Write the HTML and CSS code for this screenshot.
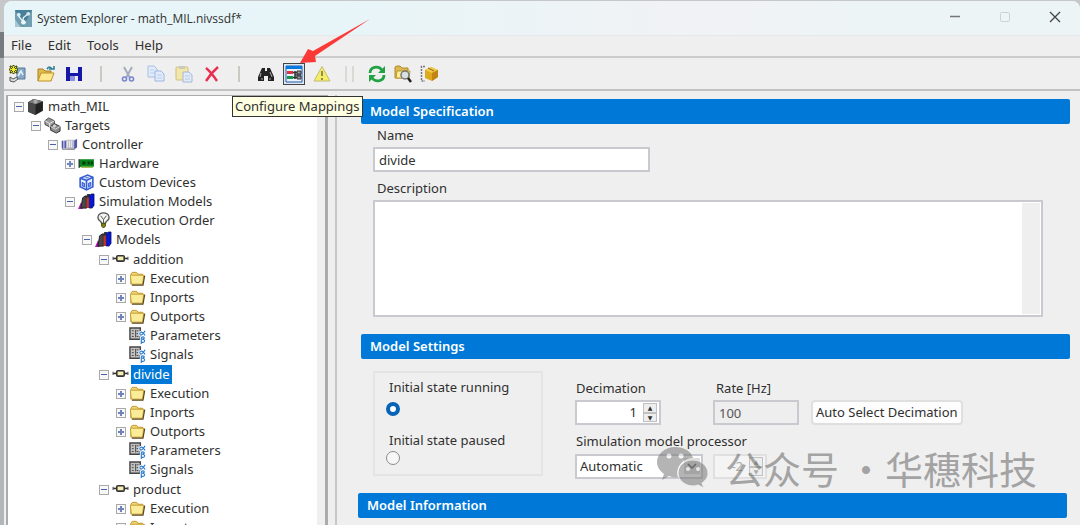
FILE: index.html
```html
<!DOCTYPE html>
<html lang="en">
<head>
<meta charset="utf-8">
<title>System Explorer - math_MIL.nivssdf*</title>
<link rel="stylesheet" href="styles.css">
</head>
<body>
<svg class="defs" aria-hidden="true">
  <symbol id="i-folder" viewBox="0 0 18 16"><path d="M2 14V3.500L3.500 1.500H8L9.500 3.500H14.500V5" fill="#f0d878" stroke="#bd9428"/><path d="M1.500 5L2.500 4.500H15.500L14.500 14H2.500Z" fill="#fbed97" stroke="#c49a30"/><path d="M3 15H14.800L16.600 5" fill="none" stroke="#5c471b" stroke-width="1.300"/></symbol>
  <symbol id="i-param" viewBox="0 0 18 18"><path d="M1 1H12V13H1Z" fill="#c4c4c4" stroke="#444" stroke-width="1.500"/><path d="M3 4H5M3 7H5M3 10H5M7 3V11M8 4H10M8 7H10M8 10H10" stroke="#444" fill="none"/><path d="M17 4C14 10 11.500 9 11.500 7S14.500 4 17 9M13 18V12C13 10 17 10 16 12L14 13C18 13 17 17 13 16" fill="none" stroke="#fff" stroke-width="3"/><path d="M17 4C14 10 11.500 9 11.500 7S14.500 4 17 9M13 18V12C13 10 17 10 16 12L14 13C18 13 17 17 13 16" fill="none" stroke="#267bd0" stroke-width="1.200"/></symbol>
  <symbol id="i-node" viewBox="0 0 16 16"><path d="M1 7H15" stroke="#333" stroke-width="1.500"/><path d="M1 5.500V8.500M15 5.500V8.500" stroke="#555"/><rect x="4.500" y="4.500" width="7" height="5" rx="1" fill="#f5efb2" stroke="#333" stroke-width="1.500"/></symbol>
  <symbol id="i-models" viewBox="0 0 18 18"><path d="M0 17L3 10L5 17Z" fill="#b317c0"/><path d="M3 16L5 5L8 3L9 5V16Z" fill="#494949" stroke="#171717"/><path d="M8 4L10 1H13L12 5V16H8Z" fill="#333"/><path d="M9 5H12V16H9Z" fill="#c1342d"/><path d="M12 3L14 1H17V13L15 16H12Z" fill="#0717d8" stroke="#090950" stroke-width=".7"/></symbol>
  <symbol id="i-cube" viewBox="0 0 16 16"><path d="M1 4L6 1L15 3V12L8 16L1 13Z" fill="#222"/><path d="M1 4L6 1L15 3L8 6Z" fill="#777"/><path d="M1 4L8 6V16L1 13Z" fill="#484848"/><circle cx="8" cy="3.300" r="2" fill="#aaa"/></symbol>
  <symbol id="i-targets" viewBox="0 0 18 18"><path d="M1 4L5 1L11 4V9L7 11L1 8Z" fill="#999" stroke="#444"/><path d="M1 4L6 7L11 4M6 7V11" fill="none" stroke="#eee"/><path d="M7 10L11 7L17 10V15L13 17L7 14Z" fill="#8b8b8b" stroke="#333"/><path d="M7 10L12 13L17 10" fill="none" stroke="#ddd"/><circle cx="11" cy="9.500" r="1.500" fill="#ddd"/></symbol>
  <symbol id="i-controller" viewBox="0 0 18 16"><path d="M1 4H4L6 3H17V11L14 14L4 12L1 13Z" fill="#bcbccb"/><path d="M1.500 4V12M4.500 4V12" stroke="#5258b0" stroke-width="1.500"/><path d="M7 4V11M9 4V11M11 4V11" stroke="#ececf2"/><path d="M14 4V13L17 11V2Z" fill="#5156a8"/><path d="M1 13H14" stroke="#777"/></symbol>
  <symbol id="i-hardware" viewBox="0 0 16 16"><path d="M1 4H15V11H3L1 12Z" fill="#06861b"/><path d="M1 4V12" stroke="#222"/><path d="M4 6H7V9H4ZM9 6H11V9H9ZM12 6H14V9H12Z" fill="#043d0b"/><path d="M3 11.500H14" stroke="#85a51d"/></symbol>
  <symbol id="i-custom" viewBox="0 0 16 16"><path d="M2 4L9 1L14 3V12L8 15L2 12Z" fill="#e9efff" stroke="#355ed3" stroke-width="1.500"/><path d="M2 4L8 6L14 3M8 6V15" fill="none" stroke="#355ed3" stroke-width="1.500"/><path d="M4 8V11L6 12V9ZM10 9L12 8V11L10 12ZM7 3.500H10" fill="#9fb5f3" stroke="#355ed3"/></symbol>
  <symbol id="i-bulb" viewBox="0 0 16 18"><path d="M6 12L5 10C0 7 2 1 8 1S16 7 11 10L10 12Z" fill="#f3f3ef" stroke="#555" stroke-width="1.400"/><path d="M8 12V8L5 4M8 8L11 4" fill="none" stroke="#555"/><path d="M6 12H10V15L8 17L6 15Z" fill="#86800c" stroke="#49480b"/></symbol>
</svg>

<div class="window">
  <header class="titlebar">
    <svg class="logo" viewBox="0 0 18 18"><rect width="18" height="18" fill="#6f9fb1"/><path d="M0 0H18L9 17Z" fill="#47809a"/><path d="M3 5L8 12L9 8L14 4" fill="none" stroke="#e4f2f5" stroke-width="1.500"/><circle cx="4" cy="5" r="2" fill="#d7e9ef"/><circle cx="14" cy="4" r="2" fill="#d7e9ef"/><circle cx="9" cy="13" r="2.500" fill="#edf7fa"/><path d="M0 10L6 18H0Z" fill="#a9c6d1"/></svg>
    <h1 class="title">System Explorer - math_MIL.nivssdf*</h1>
    <div class="controls">
      <button class="control" aria-label="Minimize"><svg viewBox="0 0 12 12"><path d="M1 5.500H11" stroke="#777" stroke-width="1.500"/></svg></button>
      <button class="control" aria-label="Maximize" disabled><svg viewBox="0 0 12 12"><rect x="1.500" y="1.500" width="9" height="9" rx="1" fill="none" stroke="#ccd2d3"/></svg></button>
      <button class="control" aria-label="Close"><svg viewBox="0 0 12 12"><path d="M1 1L11 11M11 1L1 11" stroke="#444" stroke-width="1.300"/></svg></button>
    </div>
  </header>
  <nav class="menubar"><button>File</button><button>Edit</button><button>Tools</button><button>Help</button></nav>
  <div class="toolbar" role="toolbar">
    <button class="tool" aria-label="New"><svg viewBox="0 0 18 18"><path d="M8 3H16V14H8Z" fill="#87a9c7" stroke="#54799a"/><path d="M9 11L12 6L14 10" fill="none" stroke="#e9f3fb" stroke-width="1.500"/><path d="M1 1L8 8M8 1L1 8M4.500 0V9M0 4.500H9" stroke="#454b00" stroke-width="2"/><path d="M2 2L7 7M7 2L2 7M4.500 1V8M1 4.500H8" stroke="#f4ea22"/><path d="M1 12L4 14L8 12L9 14L5 17L1 16Z" fill="#ddd" stroke="#555"/></svg></button>
    <button class="tool" aria-label="Open"><svg viewBox="0 0 18 18"><path d="M1 16V4H6L8 6H14V16" fill="#e1ba4d" stroke="#a87f22"/><path d="M1 16L4 8H17L14 16Z" fill="#ffe990" stroke="#bd9126"/><path d="M10 4C12 1 14 2 15 4M12 4H17V1" fill="none" stroke="#287f93" stroke-width="1.500"/></svg></button>
    <button class="tool" aria-label="Save"><svg viewBox="0 0 18 18"><path d="M1 2H17V16H1Z" fill="#1718a8"/><path d="M5 2H13V8H5Z" fill="#eceef8"/><path d="M5 11H13V16H5Z" fill="#8f94d8"/><path d="M10 11H13V16H10Z" fill="#e8eafa"/></svg></button>
    <span class="sep"></span>
    <button class="tool" aria-label="Cut"><svg viewBox="0 0 18 18"><path d="M5 2L11 13M13 2L7 13" stroke="#a5adbd" stroke-width="2"/><circle cx="5.500" cy="14" r="2" fill="none" stroke="#7786d1" stroke-width="1.600"/><circle cx="12.500" cy="14" r="2" fill="none" stroke="#7786d1" stroke-width="1.600"/></svg></button>
    <button class="tool" aria-label="Copy"><svg viewBox="0 0 18 18"><path d="M1 1H7L10 4V12H1Z" fill="#e1ecfb" stroke="#a6bfe4"/><path d="M3 5H7M3 8H8" stroke="#b9cdec"/><path d="M8 6H14L17 9V16H8Z" fill="#e1ecfb" stroke="#9cb7df"/><path d="M10 10H15M10 13H15" stroke="#b9cdec"/></svg></button>
    <button class="tool" aria-label="Paste"><svg viewBox="0 0 18 18"><rect x="1" y="2" width="12" height="13" rx="1" fill="#f3e7a8" stroke="#cfc080"/><path d="M4 1H10V4H4Z" fill="#c9c9bd"/><path d="M8 7H14L17 10V17H8Z" fill="#e1ebf8" stroke="#a4b8d8"/><path d="M10 11H15M10 14H15" stroke="#b8c9e2"/></svg></button>
    <button class="tool" aria-label="Delete"><svg viewBox="0 0 18 18"><path d="M3 3Q8 7 14 16M15 2Q8 8 3 16" fill="none" stroke="#e92f50" stroke-width="2.400"/></svg></button>
    <span class="sep"></span>
    <button class="tool" aria-label="Find"><svg viewBox="0 0 18 18"><path d="M5 3H8V6H10V3H13L17 12V16H11V11H7V16H1V12Z" fill="#232323"/><path d="M4 8L3 12M13 7L15 12M5 13V15M13 13V15" stroke="#aaa"/></svg></button>
    <button class="tool tool-active" aria-label="Configure Mappings"><svg viewBox="0 0 18 18"><path d="M1 1H17V17H1Z" fill="#e9f2fc" stroke="#2459aa"/><path d="M1 1H17V4H1Z" fill="#0879df"/><path d="M2 6H8V9H2Z" fill="#dc3340"/><path d="M2 11H8V14H2Z" fill="#169645"/><path d="M8 7.500H16M8 12.500H16M10 10H16M10 6V14" stroke="#333" stroke-width="1.500"/><path d="M12 6H16V9H12ZM12 11H16V14H12Z" fill="#999" stroke="#333"/></svg></button>
    <button class="tool" aria-label="Warnings"><svg viewBox="0 0 18 18"><path d="M9 1.500L17 16H1Z" fill="#f5ed66" stroke="#c4bb79"/><path d="M9 6V11M9 13V15" stroke="#77734f" stroke-width="1.600"/></svg></button>
    <span class="sep sep-double"></span>
    <span class="tool-group">
      <button class="tool" aria-label="Refresh"><svg viewBox="0 0 18 18"><path d="M2 8C2 2 10 0 14 5M16 10C16 16 8 18 4 13" fill="none" stroke="#21a345" stroke-width="2.800"/><path d="M17 1V8H10ZM1 17V10H8Z" fill="#21a345"/></svg></button>
      <button class="tool" aria-label="Browse"><svg viewBox="0 0 18 18"><path d="M1 13V2L3 1H6L8 3H14V6L13 13Z" fill="#dab94e" stroke="#b08a2c"/><path d="M3 6H16L15 13H2Z" fill="#ffed9c" stroke="#bd9835"/><circle cx="11" cy="10" r="4" fill="#d5e1e4" stroke="#777" stroke-width="1.500"/><path d="M14 13L17 17" stroke="#222" stroke-width="2.500"/></svg></button>
      <button class="tool" aria-label="Package"><svg viewBox="0 0 18 18"><path d="M5 1.500H1.500V16H5" fill="none" stroke="#777" stroke-width="1.500" stroke-dasharray="2 1"/><path d="M5 5L11 2L18 5V12L12 16L5 13Z" fill="#dda91f"/><path d="M5 5L12 8L18 5L11 2Z" fill="#f1ca4c"/><path d="M12 8V16L18 12V5Z" fill="#c08513"/><path d="M8 3L14 6" stroke="#8a6517"/></svg></button>
    </span>
  </div>

  <main class="workspace">
    <aside class="sidebar">
      <ul class="tree">
        <li><div class="row"><button class="toggle" aria-label="Collapse"></button><svg class="icon"><use href="#i-cube"/></svg><span class="name">math_MIL</span></div>
        <ul><li><div class="row"><button class="toggle" aria-label="Collapse"></button><svg class="icon"><use href="#i-targets"/></svg><span class="name">Targets</span></div>
        <ul><li><div class="row"><button class="toggle" aria-label="Collapse"></button><svg class="icon"><use href="#i-controller"/></svg><span class="name">Controller</span></div>
        <ul>
          <li><div class="row"><button class="toggle plus" aria-label="Expand"></button><svg class="icon"><use href="#i-hardware"/></svg><span class="name">Hardware</span></div></li>
          <li><div class="row"><span class="blank"></span><svg class="icon"><use href="#i-custom"/></svg><span class="name">Custom Devices</span></div></li>
          <li><div class="row"><button class="toggle" aria-label="Collapse"></button><svg class="icon"><use href="#i-models"/></svg><span class="name">Simulation Models</span></div>
          <ul>
            <li><div class="row"><span class="blank"></span><svg class="icon"><use href="#i-bulb"/></svg><span class="name">Execution Order</span></div></li>
            <li><div class="row"><button class="toggle" aria-label="Collapse"></button><svg class="icon"><use href="#i-models"/></svg><span class="name">Models</span></div>
            <ul>
              <li class="model"><div class="row"><button class="toggle" aria-label="Collapse"></button><svg class="icon"><use href="#i-node"/></svg><span class="name">addition</span></div>
                <ul>
                  <li><div class="row"><button class="toggle plus" aria-label="Expand"></button><svg class="icon"><use href="#i-folder"/></svg><span class="name">Execution</span></div></li>
                  <li><div class="row"><button class="toggle plus" aria-label="Expand"></button><svg class="icon"><use href="#i-folder"/></svg><span class="name">Inports</span></div></li>
                  <li><div class="row"><button class="toggle plus" aria-label="Expand"></button><svg class="icon"><use href="#i-folder"/></svg><span class="name">Outports</span></div></li>
                  <li><div class="row"><span class="blank"></span><svg class="icon"><use href="#i-param"/></svg><span class="name">Parameters</span></div></li>
                  <li><div class="row"><span class="blank"></span><svg class="icon"><use href="#i-param"/></svg><span class="name">Signals</span></div></li>
                </ul></li>
              <li class="model"><div class="row"><button class="toggle" aria-label="Collapse"></button><svg class="icon"><use href="#i-node"/></svg><span class="name selected">divide</span></div>
                <ul>
                  <li><div class="row"><button class="toggle plus" aria-label="Expand"></button><svg class="icon"><use href="#i-folder"/></svg><span class="name">Execution</span></div></li>
                  <li><div class="row"><button class="toggle plus" aria-label="Expand"></button><svg class="icon"><use href="#i-folder"/></svg><span class="name">Inports</span></div></li>
                  <li><div class="row"><button class="toggle plus" aria-label="Expand"></button><svg class="icon"><use href="#i-folder"/></svg><span class="name">Outports</span></div></li>
                  <li><div class="row"><span class="blank"></span><svg class="icon"><use href="#i-param"/></svg><span class="name">Parameters</span></div></li>
                  <li><div class="row"><span class="blank"></span><svg class="icon"><use href="#i-param"/></svg><span class="name">Signals</span></div></li>
                </ul></li>
              <li class="model"><div class="row"><button class="toggle" aria-label="Collapse"></button><svg class="icon"><use href="#i-node"/></svg><span class="name">product</span></div>
                <ul>
                  <li><div class="row"><button class="toggle plus" aria-label="Expand"></button><svg class="icon"><use href="#i-folder"/></svg><span class="name">Execution</span></div></li>
                  <li><div class="row"><button class="toggle plus" aria-label="Expand"></button><svg class="icon"><use href="#i-folder"/></svg><span class="name">Inports</span></div></li>
                </ul></li>
            </ul></li>
          </ul></li>
        </ul></li></ul></li></ul></li>
      </ul>
      <div class="track"></div>
    </aside>
    <div class="splitter"></div>
    <div class="details">
      <section class="section">
        <h2 class="heading">Model Specification</h2>
        <div class="spec">
          <label for="name">Name</label>
          <input class="field name-field" id="name" type="text" value="divide">
          <label for="description">Description</label>
          <div class="memo"><textarea id="description"></textarea><div class="memo-track"></div></div>
        </div>
      </section>
      <section class="section">
        <h2 class="heading">Model Settings</h2>
        <div class="settings">
          <div class="state">
            <label for="running">Initial state running</label>
            <input class="radio" id="running" name="state" type="radio" checked>
            <label for="paused">Initial state paused</label>
            <input class="radio" id="paused" name="state" type="radio">
          </div>
          <div class="timing">
            <div class="timing-row">
              <div class="group">
                <label for="decimation">Decimation</label>
                <div class="field spin"><input id="decimation" type="text" value="1"><span class="steps"><button aria-label="Increase decimation">▲</button><button aria-label="Decrease decimation">▼</button></span></div>
              </div>
              <div class="group rate">
                <label for="rate">Rate [Hz]</label>
                <input class="field readonly" id="rate" type="text" value="100" readonly>
              </div>
              <button class="auto">Auto Select Decimation</button>
            </div>
            <label for="processor">Simulation model processor</label>
            <div class="processor-row">
              <div class="select"><select class="field" id="processor"><option>Automatic</option></select><svg class="chevron" viewBox="0 0 18 18"><rect x="1" y="1" width="16" height="16" fill="#ddd"/><path d="M5 7L9 11L13 7" fill="none" stroke="#555" stroke-width="1.500"/></svg></div>
              <div class="field spin spin-off"><input type="text" value="-2" aria-label="Processor index" disabled><span class="steps"><button aria-label="Increase processor" disabled>▲</button><button aria-label="Decrease processor" disabled>▼</button></span></div>
            </div>
          </div>
        </div>
      </section>
      <section class="section section-info"><h2 class="heading">Model Information</h2></section>
    </div>
  </main>
</div>
<div class="tooltip" role="tooltip">Configure Mappings</div>
<svg class="arrow" viewBox="0 0 74 48" aria-hidden="true"><path d="M72 1L15 33L10 31L2 45L18 44L17 38Z" fill="#fb3a38"/></svg>
<div class="watermark">
  <svg viewBox="0 0 52 44"><path d="M18 1C8 1 0 8 0 16C0 21 3 25 7 28L5 34L12 30Q16 32 21 31C18 20 27 12 36 12C34 5 27 1 18 1Z" fill="#777"/><path d="M36 14C27 14 21 20 21 27S28 40 36 40Q39 40 41 39L47 42L45 37C49 34 51 31 51 27C51 20 44 14 36 14Z" fill="#777" stroke="#eee"/><g fill="#eee"><circle cx="12" cy="10" r="2.500"/><circle cx="24" cy="10" r="2.500"/><circle cx="31" cy="23" r="2"/><circle cx="41" cy="23" r="2"/></g></svg>
  <div class="account"><span>公众号</span><span class="dot">·</span><span>华穗科技</span></div>
</div>
</body>
</html>
```
FILE: styles.css
```css
* { box-sizing: border-box; }
body {
  position: relative;
  display: flex;
  height: 100vh;
  margin: 0;
  padding: 1px 0 0 4px;
  overflow: hidden;
  background: linear-gradient(#c5c7c9 0 32px, #777b80 32px 58px, #b3b6b9 58px);
  color: #303030;
  font: 13px/19px "Noto Sans", "Noto Sans CJK SC", sans-serif;
}
button, input, select, textarea { margin: 0; color: inherit; font: inherit; }
button { padding: 0; border: 0; background: none; }
.defs { position: absolute; width: 0; height: 0; }
.window {
  display: flex;
  flex: 1;
  flex-direction: column;
  min-width: 0;
  border-radius: 8px 8px 0 0;
  background: #efefef;
  overflow: hidden;
}

/* Title, menu and tools */
.titlebar {
  display: flex;
  flex: none;
  align-items: center;
  height: 35px;
  padding-left: 11px;
  border-bottom: 1px solid #e6e8e9;
  background: linear-gradient(90deg, #e7f5f8 30%, #f1f2f5 65%, #edf4f6 80%);
}
.logo { width: 17px; height: 17px; }
.title { flex: 1; margin: 0 0 0 5px; font: 12px/19px "Open Sans", sans-serif; }
.controls { display: flex; }
.control { width: 50px; height: 32px; }
.control svg { width: 12px; height: 12px; }
.menubar {
  display: flex;
  flex: none;
  gap: 16px;
  height: 22px;
  padding-left: 7px;
  border-bottom: 2px solid #cbcbcb;
}
.menubar button { height: 19px; }
.toolbar {
  display: flex;
  flex: none;
  align-items: center;
  height: 33px;
  border-bottom: 2px solid #c2c2c2;
}
.tool { display: flex; align-items: center; justify-content: center; width: 28px; height: 22px; }
.tool svg { width: 18px; height: 18px; }
.tool-active svg { box-sizing: content-box; padding: 1px; border: 1px solid #444; background: #dce7f3; }
.tool-group { display: flex; padding-left: 2px; }
.tool-group .tool { width: 26px; }
.sep { display: flex; justify-content: center; width: 26px; }
.sep::before { width: 2px; height: 16px; background: #ccc8c2; content: ""; }
.sep-double::before { width: 5px; border: solid #dcd9d4; border-width: 0 2px; background: none; }

/* Tree */
.workspace { display: flex; flex: 1; min-height: 0; padding-top: 4px; }
.sidebar {
  display: flex;
  flex: none;
  width: 322px;
  margin-left: 2px;
  overflow: hidden;
  border: solid #a9abad;
  border-width: 1px 3px 0 2px;
  background: #fff;
}
.tree { flex: 1; padding: 1px 0 0 6px; }
.tree, .tree ul { margin: 0; list-style: none; }
.tree ul { padding: 0 0 0 17px; }
.model { padding-top: 1px; }
.row { display: flex; align-items: center; height: 19px; white-space: nowrap; }
.toggle {
  display: grid;
  flex: none;
  place-items: center;
  width: 10px;
  height: 10px;
  border: 1px solid #a9a9a9;
  background: linear-gradient(90deg, #4763ad, #4763ad) center / 6px 1px no-repeat #f8f8f8;
}
.toggle.plus {
  background:
    linear-gradient(#6f84bd, #6f84bd) center / 6px 2px no-repeat,
    linear-gradient(#6f84bd, #6f84bd) center / 2px 6px no-repeat, #f8f8f8;
}
.blank { flex: none; width: 10px; }
.icon { flex: none; width: 17px; height: 17px; margin: 0 2px 0 3px; }
.name { padding: 0 2px; }
.selected { background: #0078d7; color: #fff; }
.track { width: 8px; background: #efefef; }
.splitter { flex: none; width: 9px; margin-right: 24px; border-right: 2px solid #c7c7ca; }

/* Details */
.details { flex: 1; min-width: 0; padding: 4px 10px 0 0; }
.section-info { margin: 0 3px 0 -3px; }
.heading {
  height: 25px;
  margin: 0;
  padding: 0 9px;
  border-radius: 2px;
  background: #0078d7;
  color: #fff;
  font-size: 13px;
  font-weight: 600;
  line-height: 25px;
}
label { display: block; height: 19px; }
.field {
  height: 25px;
  border: 2px solid #c8cacf;
  border-radius: 0;
  background: #fff;
  outline: 0;
}
.spec { padding: 2px 27px 17px 12px; }
.spec label { padding-left: 4px; }
.name-field { display: block; width: 277px; margin: 2px 0 7px; padding: 0 4px; }
.memo { display: flex; height: 117px; margin-top: 2px; padding: 1px; border: 2px solid #c8cacf; background: #fff; }
.memo textarea { flex: 1; border: 0; outline: 0; resize: none; }
.memo-track { width: 18px; background: #efefef; }
.settings { display: flex; gap: 32px; padding: 12px 12px 14px; }
.state { width: 170px; height: 105px; padding: 5px 0 0 13px; border: 2px solid #e4e4e4; }
.state label { padding-left: 1px; }
.radio {
  display: block;
  width: 14px;
  height: 14px;
  margin: 5px 0 15px -2px;
  border: 1px solid #8b8b8b;
  border-radius: 50%;
  background: #f7f7f7;
  appearance: none;
}
.radio:checked { border: 4px solid #0563b8; background: #fff; }
.state label:nth-of-type(2) + .radio { margin-top: 1px; }
.timing { flex: 1; padding-top: 8px; }
.timing > label { margin: 7px 0 3px; padding-left: 1px; }
.timing-row { display: flex; align-items: flex-end; }
.group { width: 86px; }
.group label { margin-bottom: 2px; padding-left: 1px; }
.rate { margin: 0 12px 0 52px; }
.rate label { padding-left: 3px; }
.readonly { width: 100%; padding: 0 4px; background: #eee; color: #555; }
.spin { display: flex; padding: 1px 2px; }
.spin input { flex: 1; width: 0; border: 0; background: none; outline: 0; text-align: right; }
.steps { display: flex; flex-direction: column; width: 14px; margin-left: 4px; }
.steps button { flex: 1; height: 9px; border: 1px solid #c0c0c0; background: #eee; font: 6px/7px "DejaVu Sans", sans-serif; }
.auto { height: 25px; padding: 0 3px; border: 2px solid #dfdfdf; border-radius: 4px; background: #fdfdfd; line-height: 19px; white-space: nowrap; }
.processor-row { display: flex; gap: 10px; }
.select { position: relative; width: 128px; }
.select select { width: 100%; padding: 0 3px; appearance: none; }
.chevron { position: absolute; top: 3px; right: 2px; width: 18px; height: 18px; pointer-events: none; }
.spin-off { width: 54px; border-color: #e0e0e2; background: #f4f4f4; color: #aaa; }

/* Overlays */
.tooltip {
  position: absolute;
  top: 96px;
  left: 232px;
  padding: 0 3px 0 2px;
  border: 1px solid #333;
  background: #ffffe1;
  white-space: nowrap;
}
.arrow { position: absolute; top: 18px; left: 298px; width: 74px; height: 48px; }
.watermark {
  position: absolute;
  top: 446px;
  right: 43px;
  display: flex;
  gap: 16px;
  align-items: center;
  color: #666;
  font: 38px/44px "Noto Sans CJK SC", sans-serif;
  opacity: .55;
  pointer-events: none;
  white-space: nowrap;
}
.watermark svg { width: 52px; height: 44px; }
.account { display: flex; }
.dot { padding-left: 8px; }
```
